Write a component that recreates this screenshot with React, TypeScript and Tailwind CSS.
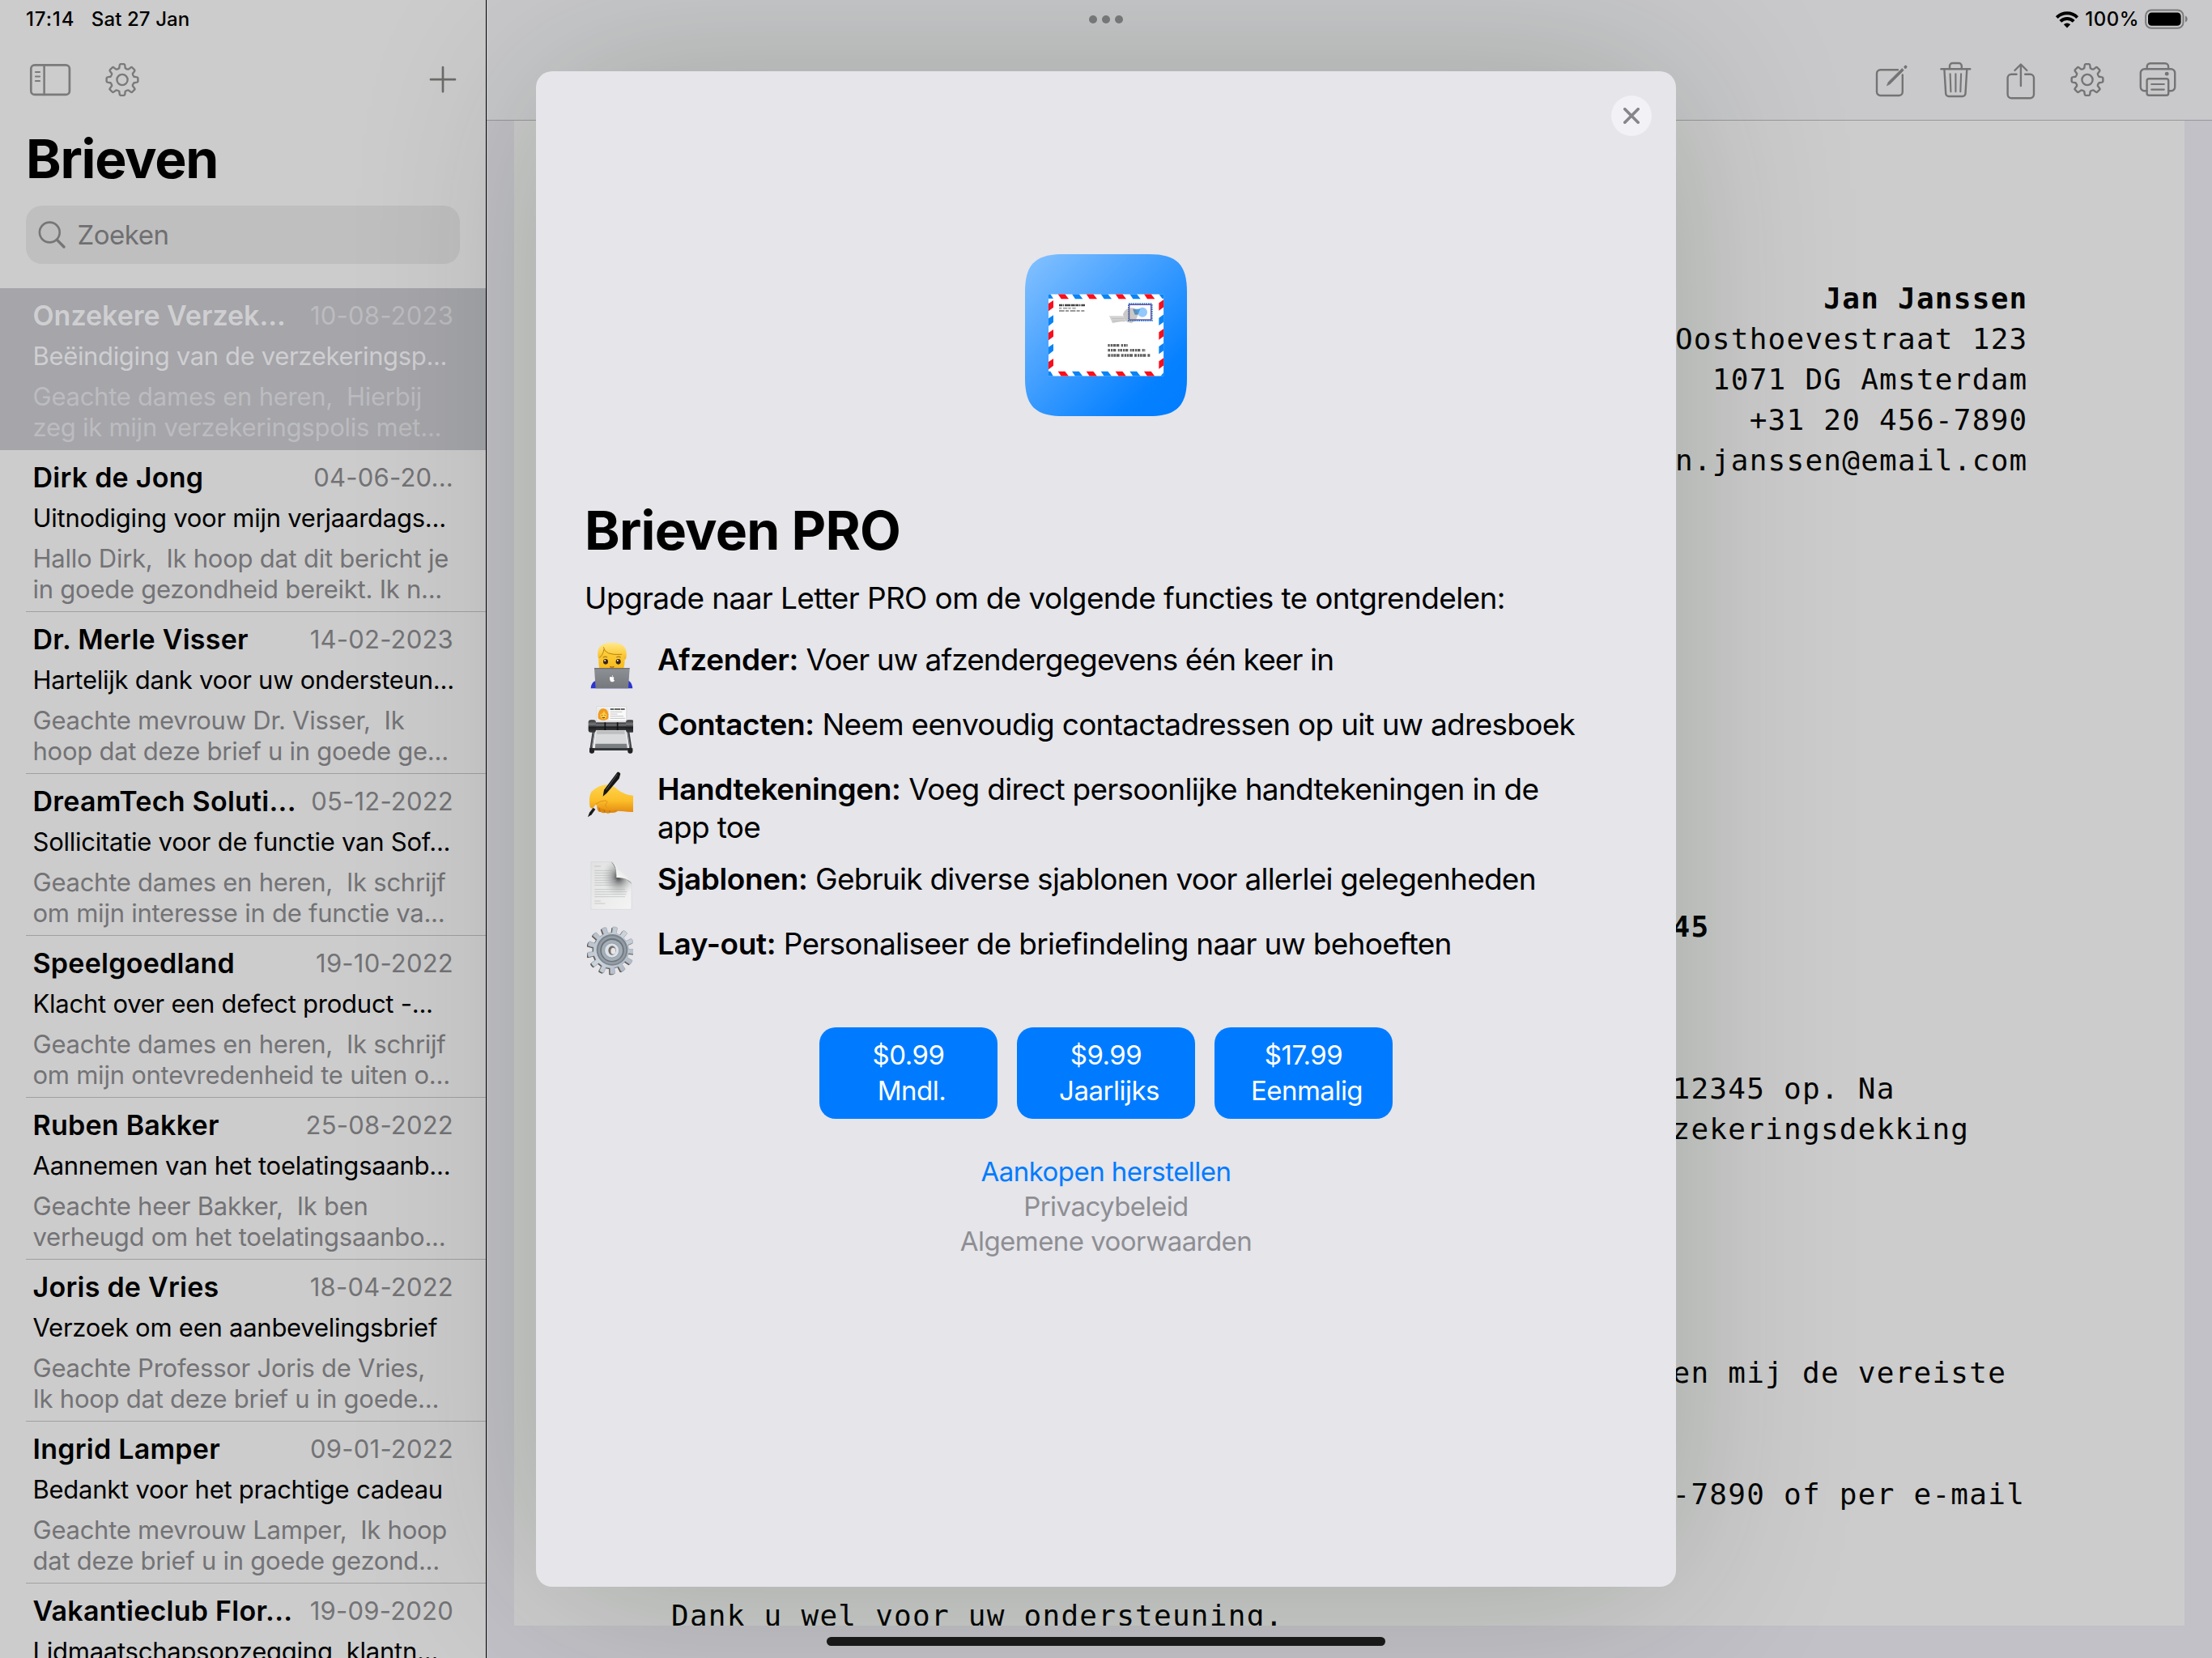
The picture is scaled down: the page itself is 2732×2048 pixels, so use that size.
import React from "react";

type Letter = {
  name: string;
  date: string;
  subject: string;
  preview: [string, string];
  selected?: boolean;
};

const letters: Letter[] = [
  { name: "Onzekere Verzek...", date: "10-08-2023", subject: "Beëindiging van de verzekeringsp...", preview: ["Geachte dames en heren,  Hierbij", "zeg ik mijn verzekeringspolis met..."], selected: true },
  { name: "Dirk de Jong", date: "04-06-20...", subject: "Uitnodiging voor mijn verjaardags...", preview: ["Hallo Dirk,  Ik hoop dat dit bericht je", "in goede gezondheid bereikt. Ik n..."] },
  { name: "Dr. Merle Visser", date: "14-02-2023", subject: "Hartelijk dank voor uw ondersteun...", preview: ["Geachte mevrouw Dr. Visser,  Ik", "hoop dat deze brief u in goede ge..."] },
  { name: "DreamTech Soluti...", date: "05-12-2022", subject: "Sollicitatie voor de functie van Sof...", preview: ["Geachte dames en heren,  Ik schrijf", "om mijn interesse in de functie va..."] },
  { name: "Speelgoedland", date: "19-10-2022", subject: "Klacht over een defect product -...", preview: ["Geachte dames en heren,  Ik schrijf", "om mijn ontevredenheid te uiten o..."] },
  { name: "Ruben Bakker", date: "25-08-2022", subject: "Aannemen van het toelatingsaanb...", preview: ["Geachte heer Bakker,  Ik ben", "verheugd om het toelatingsaanbo..."] },
  { name: "Joris de Vries", date: "18-04-2022", subject: "Verzoek om een aanbevelingsbrief", preview: ["Geachte Professor Joris de Vries,", "Ik hoop dat deze brief u in goede..."] },
  { name: "Ingrid Lamper", date: "09-01-2022", subject: "Bedankt voor het prachtige cadeau", preview: ["Geachte mevrouw Lamper,  Ik hoop", "dat deze brief u in goede gezond..."] },
  { name: "Vakantieclub Flor...", date: "19-09-2020", subject: "Lidmaatschapsopzegging, klantn...", preview: ["", ""] },
];

function polar(cx: number, cy: number, r: number, deg: number) {
  const a = ((deg - 90) * Math.PI) / 180;
  return `${(cx + r * Math.cos(a)).toFixed(2)} ${(cy + r * Math.sin(a)).toFixed(2)}`;
}

/* Closed outline of a cog; half-angles give the tooth width at tip and root. */
function cogPath(cx: number, cy: number, outer: number, inner: number, teeth: number, tip: number, root: number, rotate = 0) {
  const step = 360 / teeth;
  const parts: string[] = [];
  for (let i = 0; i < teeth; i++) {
    const c = rotate + i * step;
    parts.push(`${i ? "L" : "M"}${polar(cx, cy, inner, c - root)}`);
    parts.push(`L${polar(cx, cy, outer - 1.8, c - tip - 1.5)}`);
    parts.push(`Q${polar(cx, cy, outer, c - tip)} ${polar(cx, cy, outer, c - tip + 3)}`);
    parts.push(`L${polar(cx, cy, outer, c + tip - 3)}`);
    parts.push(`Q${polar(cx, cy, outer, c + tip)} ${polar(cx, cy, outer - 1.8, c + tip + 1.5)}`);
    parts.push(`L${polar(cx, cy, inner, c + root)}`);
    parts.push(`Q${polar(cx, cy, inner - 0.9, c + step / 2)} ${polar(cx, cy, inner, c + step - root)}`);
  }
  return parts.join("") + "Z";
}

function ToolIcon({ children, className = "" }: { children: React.ReactNode; className?: string }) {
  return (
    <svg viewBox="0 0 48 48" className={`size-12 shrink-0 overflow-visible ${className}`} fill="none" stroke="currentColor" strokeWidth="2.4" strokeLinecap="round" strokeLinejoin="round">
      {children}
    </svg>
  );
}

const gearOutline = cogPath(24, 23.5, 19.5, 14.9, 8, 9.5, 14.5);

function Gear({ className = "" }: { className?: string }) {
  return (
    <ToolIcon className={className}>
      <path d={gearOutline} />
      <circle cx="24" cy="23.5" r="6.6" />
    </ToolIcon>
  );
}

function LetterRow({ letter, last }: { letter: Letter; last: boolean }) {
  const s = letter.selected;
  return (
    <li className={`flex h-[200px] shrink-0 flex-col ${s ? "bg-[#a5a5aa]" : ""}`}>
      <div className="flex h-[59px] items-end justify-between pl-[40.5px] pr-10">
        <span className={`text-[34px] font-semibold leading-[50px] whitespace-nowrap ${s ? "tracking-[-0.02px] text-[#cfcfd1]" : "tracking-[0.25px] text-black"}`}>{letter.name}</span>
        <span className={`text-[31px] leading-[50px] tracking-[0.22px] whitespace-nowrap ${s ? "text-[#bcbcbf]" : "text-[#737376]"}`}>{letter.date}</span>
      </div>
      <div className={`pl-[40.5px] text-[31px] leading-[50px] whitespace-pre ${s ? "tracking-[-0.34px] text-[#cfcfd1]" : "tracking-[-0.25px] text-black"}`}>{letter.subject}</div>
      <div className={`grow pl-[40.5px] pt-[6px] text-[31px] leading-[38px] tracking-[-0.25px] whitespace-pre ${s ? "text-[#bcbcbf]" : "text-[#737376]"}`}>
        <div>{letter.preview[0]}</div>
        <div>{letter.preview[1]}</div>
      </div>
      {!s && !last && <div className="ml-8 h-px bg-[#a0a0a1]" />}
    </li>
  );
}

function Sidebar() {
  return (
    <aside className="flex h-full w-[601px] shrink-0 flex-col overflow-hidden border-r border-black bg-[#cccccc]">
      <div className="flex h-12 shrink-0 items-center gap-[20.5px] pl-8 text-[24px] font-medium leading-none tracking-[0.1px] text-black">
        <span className="tracking-[0.9px]">17:14</span>
        <span>Sat 27 Jan</span>
      </div>
      <div className="flex h-[100px] shrink-0 items-center pl-[34px] pr-[29px] pt-[2px] text-[#7a7a7a]">
        <svg viewBox="0 0 56 48" className="h-12 w-14 shrink-0" fill="none" stroke="currentColor" strokeLinecap="round">
          <rect x="4.3" y="5.3" width="47.6" height="36.6" rx="4.5" strokeWidth="2.7" />
          <path d="M20.6 5.5V42" strokeWidth="2.5" />
          <path d="M10 14H15M10 19.5H15M10 25H15" strokeWidth="2.2" />
        </svg>
        <Gear className="ml-[36.5px]" />
        <svg viewBox="0 0 48 48" className="ml-auto size-12 shrink-0" fill="none" stroke="#6c6c6b" strokeWidth="2.7" strokeLinecap="round">
          <path d="M24 8.2V38.2M9 23.2H39" />
        </svg>
      </div>
      <h1 className="mt-2 shrink-0 pl-8 text-[66px] font-bold leading-[80px] tracking-[-1.25px] text-black">Brieven</h1>
      <div className="mx-8 mt-[18px] flex h-[72px] shrink-0 items-center rounded-[20px] bg-[#bfbfbf] pl-[15px]">
        <svg viewBox="0 0 36 36" className="size-9" fill="none" stroke="#767677" strokeLinecap="round">
          <circle cx="14.3" cy="15" r="12.4" strokeWidth="2.6" />
          <path d="M23.5 24.4L32 33" strokeWidth="3.4" />
        </svg>
        <span className="ml-[12.5px] text-[33px] leading-[72px] tracking-[-0.48px] text-[#6f6f71]">Zoeken</span>
      </div>
      <ul className="mt-[30px] flex flex-col">
        {letters.map((l, i) => (
          <LetterRow key={l.name} letter={l} last={i === letters.length - 1} />
        ))}
      </ul>
    </aside>
  );
}

function Toolbar() {
  return (
    <header className="flex h-[149px] shrink-0 flex-col border-b border-[#98989a] bg-[#c9c9cb]">
      <div className="flex h-12 shrink-0 items-center justify-end pr-[29px] text-black">
        <svg viewBox="0 0 30 22" className="mr-[7px] h-[22px] w-[30px]" fill="none" stroke="black" strokeWidth="4">
          <path d="M2.3 8.6A18 18 0 0 1 27.7 8.6" />
          <path d="M6.8 13.4A11.6 11.6 0 0 1 23.2 13.4" />
          <path d="M15 21.4L10.9 17.2A5.8 5.8 0 0 1 19.1 17.2Z" fill="black" stroke="none" />
        </svg>
        <span className="mr-[7px] text-[24px] font-medium leading-none tracking-[0.5px]">100%</span>
        <svg viewBox="0 0 54 26" className="h-[26px] w-[54px]">
          <rect x="1.1" y="1.4" width="46.4" height="22.4" rx="7" fill="none" stroke="#7b7b7c" strokeWidth="2" />
          <rect x="4" y="4.4" width="40.6" height="16.4" rx="4.4" fill="black" />
          <path d="M50 8.6C53.6 9.8 53.6 15.4 50 16.6Z" fill="#7b7b7c" />
        </svg>
      </div>
      <div className="flex h-[100px] shrink-0 items-center justify-end pr-[43px] pt-[2px] text-[#747475]">
        <ToolIcon>
          <path d="M32 11.2H10.5A4.5 4.5 0 0 0 6 15.7V38.5A4.5 4.5 0 0 0 10.5 43H33.3A4.5 4.5 0 0 0 37.8 38.5V17.5" />
          <path d="M18.6 30.4L20.4 26.2L37.2 9.6L39.3 11.7L22.6 28.6Z" fill="currentColor" strokeWidth="0.8" />
          <path d="M41.3 7.9L41.6 7.6" strokeWidth="3.8" />
        </ToolIcon>
        <ToolIcon className="ml-[31px]">
          <path d="M6.5 10.3H42.2" />
          <path d="M17 10V6.5A3.5 3.5 0 0 1 20.5 3H28.3A3.5 3.5 0 0 1 31.8 6.5V10" />
          <path d="M10.4 10.5L12.2 40.5A3.6 3.6 0 0 0 15.8 44H32.9A3.6 3.6 0 0 0 36.5 40.5L38.3 10.5" />
          <path d="M17.6 16.2L18.4 38.2M24.4 16.2V38.2M31.1 16.2L30.3 38.2" strokeWidth="2.1" />
        </ToolIcon>
        <ToolIcon className="ml-[33px]">
          <path d="M18.6 16.7H12.2A4.6 4.6 0 0 0 7.6 21.3V41.6A4.6 4.6 0 0 0 12.2 46.2H35.4A4.6 4.6 0 0 0 40 41.6V21.3A4.6 4.6 0 0 0 35.4 16.7H29.2" />
          <path d="M23.9 31V4.6M16.4 12L23.9 4.5L31.4 12" />
        </ToolIcon>
        <Gear className="ml-[33.5px]" />
        <ToolIcon className="ml-[39.5px]">
          <path d="M10.4 37.2H7.4A4.6 4.6 0 0 1 2.8 32.6V15.2A5 5 0 0 1 7.8 10.2H40.2A5 5 0 0 1 45.2 15.2V32.6A4.6 4.6 0 0 1 40.6 37.2H37.4" />
          <path d="M10.7 10V7.2A4 4 0 0 1 14.7 3.2H33.1A4 4 0 0 1 37.1 7.2V10" />
          <rect x="10.6" y="22.2" width="26.6" height="20.6" rx="2.6" />
          <path d="M16.2 29H31.8M16.2 35.6H31.8" strokeWidth="2.1" />
          <circle cx="35.2" cy="16.2" r="2.4" fill="currentColor" stroke="none" />
        </ToolIcon>
      </div>
    </header>
  );
}

function Paper() {
  return (
    <div className="mx-[34px] flex h-[1859px] shrink-0 flex-col overflow-hidden bg-[#cccccc] pt-[194.5px] font-['DejaVu_Sans_Mono',monospace] text-[36px] leading-[50px] tracking-[1.25px] whitespace-pre text-[#050505]">
      <div className="flex flex-col items-end pr-[193.5px]">
        <div className="font-bold">Jan Janssen</div>
        <div>Oosthoevestraat 123</div>
        <div>1071 DG Amsterdam</div>
        <div>+31 20 456-7890</div>
        <div>n.janssen@email.com</div>
      </div>
      <div className="mt-[526.5px] pl-[1430.5px] font-bold">45</div>
      <div className="mt-[150px] pl-[1430.5px]">12345 op. Na</div>
      <div className="pl-[1430.5px]">zekeringsdekking</div>
      <div className="mt-[250.5px] pl-[1430.5px]">en mij de vereiste</div>
      <div className="mt-[100px] pl-[1430.5px]">-7890 of per e-mail</div>
      <div className="mt-[100px] pl-[194px]">Dank u wel voor uw ondersteuning.</div>
    </div>
  );
}

function AppIcon() {
  const red = [200, 305, 413, 519];
  const blue = [252, 359, 466];
  return (
    <svg viewBox="78 72 600 600" className="size-[200px]">
      <defs>
        <linearGradient id="appBg" x1="0" y1="0" x2="1" y2="1">
          <stop offset="0" stopColor="#86c2ff" />
          <stop offset="0.8" stopColor="#0580ff" />
          <stop offset="1" stopColor="#007dff" />
        </linearGradient>
        <clipPath id="envelope">
          <rect x="165" y="220" width="427" height="304" rx="3" />
        </clipPath>
      </defs>
      <path d="M78 212C78 110 116 72 218 72H538C640 72 678 110 678 212V532C678 634 640 672 538 672H218C116 672 78 634 78 532Z" fill="url(#appBg)" />
      <g clipPath="url(#envelope)">
        <rect x="165" y="220" width="427" height="304" fill="white" />
        {red.map((x) => (
          <React.Fragment key={x}>
            <path d={`M${x} 220H${x + 26}L${x + 40} 238H${x + 12}Z`} fill="#fb0d1b" />
            <path d={`M${x} 506H${x + 26}L${x + 40} 524H${x + 12}Z`} fill="#fb0d1b" />
          </React.Fragment>
        ))}
        {blue.map((x) => (
          <React.Fragment key={x}>
            <path d={`M${x} 220H${x + 26}L${x + 40} 238H${x + 12}Z`} fill="#0a84f5" />
            <path d={`M${x} 506H${x + 26}L${x + 40} 524H${x + 12}Z`} fill="#0a84f5" />
          </React.Fragment>
        ))}
        {[243, 351, 459].map((y) => (
          <React.Fragment key={y}>
            <path d={`M165 ${y + 12}L183 ${y}V${y + 26}L165 ${y + 40}Z`} fill="#fb0d1b" />
            <path d={`M574 ${y + 10}L592 ${y - 3}V${y + 25}L574 ${y + 38}Z`} fill="#fb0d1b" />
          </React.Fragment>
        ))}
        {[298, 404].map((y) => (
          <React.Fragment key={y}>
            <path d={`M165 ${y + 12}L183 ${y}V${y + 26}L165 ${y + 40}Z`} fill="#0a84f5" />
            <path d={`M574 ${y + 10}L592 ${y - 3}V${y + 25}L574 ${y + 38}Z`} fill="#0a84f5" />
          </React.Fragment>
        ))}
        <path d="M165 220H172L183 236H165ZM574 220H592V236H586ZM165 506H172L183 524H165ZM580 524L592 510V524Z" fill="#0a84f5" />
      </g>
      <g fill="none" strokeWidth="6">
        <path d="M204 261H300" strokeDasharray="12 2 4 3 22 2 14 2" stroke="#444" strokeWidth="7" />
        <path d="M204 272H266" strokeDasharray="10 5 16 3" stroke="#aaa" />
        <path d="M204 282H298" strokeDasharray="20 4 12 5" stroke="#999" />
      </g>
      <path d="M390 301H440L448 318L402 328Z" fill="#d2d2d2" />
      <path d="M400 311H445M402 320H450" stroke="#bdbdbd" strokeWidth="3" />
      <rect x="462" y="256" width="86" height="62" fill="white" stroke="#2f7fdf" strokeWidth="6" strokeDasharray="5 3" />
      <rect x="464" y="259" width="81" height="56" fill="white" stroke="#5b4f9c" strokeWidth="4" />
      <circle cx="513" cy="287" r="18" fill="#93c8fb" />
      <path d="M477 275H505L496 296H485Z" fill="#4f9de0" />
      <path d="M441 293Q452 266 484 272L497 292Q494 318 472 328Q440 322 441 293Z" fill="#777" opacity="0.4" />
      <g stroke="#222" strokeWidth="10" opacity="0.72">
        <path d="M385 410H458" strokeDasharray="7 3 8 2 9 2 11 7" />
        <path d="M385 428H523" strokeDasharray="8 3 7 2 10 7 6 2" />
        <path d="M385 447H541" strokeDasharray="9 3 7 2 8 2 12 6" />
      </g>
    </svg>
  );
}

const emojiClass = "h-[60px] w-[57px] shrink-0";

function TechnologistIcon() {
  return (
    <svg viewBox="75 70 171 180" className={emojiClass}>
      <defs>
        <linearGradient id="face" x1="0" y1="0" x2="0" y2="1">
          <stop offset="0" stopColor="#ffd541" />
          <stop offset="1" stopColor="#f5b91f" />
        </linearGradient>
        <linearGradient id="hair" x1="0" y1="0" x2="0" y2="1">
          <stop offset="0" stopColor="#ffe98c" />
          <stop offset="0.6" stopColor="#fccf45" />
          <stop offset="1" stopColor="#f0b023" />
        </linearGradient>
        <linearGradient id="laptop" x1="0" y1="0" x2="0" y2="1">
          <stop offset="0" stopColor="#8d9094" />
          <stop offset="1" stopColor="#75787d" />
        </linearGradient>
      </defs>
      <path d="M89 245Q90 222 108 216H228Q242 222 244 245Z" fill="#2a35d0" />
      <path d="M119 120Q116 148 121 172H211Q217 148 214 116Q200 90 167 90Q132 92 119 120Z" fill="url(#face)" />
      <path d="M117 136Q104 76 166 75Q230 74 220 134L215 140Q212 124 204 119Q162 124 138 100Q132 124 122 128Q119 131 117 136Z" fill="url(#hair)" />
      <path d="M136 92Q140 124 204 119M138 100Q133 124 121 131" fill="none" stroke="#b9800f" strokeWidth="3" />
      <ellipse cx="144" cy="146" rx="9" ry="10" fill="#3c2313" />
      <ellipse cx="191" cy="146" rx="9" ry="10" fill="#3c2313" />
      <circle cx="141.5" cy="142" r="2.8" fill="white" />
      <circle cx="188.5" cy="142" r="2.8" fill="white" />
      <path d="M135 130Q142 125 149 129M185 129Q192 125 199 130" fill="none" stroke="#b07a18" strokeWidth="3.500" strokeLinecap="round" />
      <path d="M160 164Q167 169 175 164" fill="none" stroke="#b0651b" strokeWidth="4" />
      <path d="M102 170H233L228 245H107Z" fill="url(#laptop)" />
      <path d="M102 170H233V173H102Z" fill="#5f6266" />
      <path d="M159 207C159 201 165 202 168 203.500C171 202 174 202.500 176 205.500C172 208 173 213 177 215C174 222 171 221 168 220C164 222 159 216 159 207ZM168 202C167.500 199 169 197 171 196C171.500 199 170 201.500 168 202Z" fill="white" />
    </svg>
  );
}

function CardIndexIcon() {
  return (
    <svg viewBox="75 310 171 180" className={emojiClass}>
      <defs>
        <linearGradient id="roller" x1="0" y1="0" x2="0" y2="1">
          <stop offset="0" stopColor="#333" />
          <stop offset="0.35" stopColor="#75777a" />
          <stop offset="0.6" stopColor="#1d1e1f" />
          <stop offset="1" stopColor="#3c3e40" />
        </linearGradient>
      </defs>
      <path d="M111 313H221V366H111Z" fill="#fafafa" stroke="#cfcfcf" strokeWidth="2" />
      <rect x="114" y="318" width="42" height="44" fill="#e4e9ee" />
      <path d="M116 354Q114 320 136 319Q158 322 154 354Q152 362 136 363Q118 362 116 354Z" fill="#f09a1c" />
      <path d="M124 342Q134 338 138 328Q142 338 148 342Q148 358 136 359Q124 358 124 342Z" fill="#fccb45" />
      <path d="M129 345H132M140 345H143M131 353Q136 356 141 353" stroke="#6b3c10" strokeWidth="3" />
      <path d="M161 322H216" stroke="#333" strokeWidth="5" strokeDasharray="14 2 22 2" />
      <path d="M161 332H205M161 340H188M161 348H210M161 356H216" stroke="#c4c4c4" strokeWidth="3" />
      <path d="M109 400H216L224 466H105Z" fill="#d9dadb" />
      <path d="M112 402H214L215 414H111Z" fill="#bcbec0" />
      <path d="M106 450H222L224 466H105Z" fill="#7c7f82" />
      <path d="M100 402L89 475M227 402L238 475" stroke="#3b3e41" strokeWidth="9" strokeLinecap="round" />
      <path d="M101 408L93 462M226 408L234 462" stroke="#8c9094" strokeWidth="2.5" />
      <rect x="84" y="466" width="160" height="9" fill="#34373a" />
      <rect x="84" y="466" width="18" height="20" rx="7" fill="#222" />
      <rect x="226" y="466" width="18" height="20" rx="7" fill="#222" />
      <rect x="96" y="371" width="136" height="29" fill="url(#roller)" />
      <path d="M142 371V400M188 371V400" stroke="#111" strokeWidth="5" />
      <rect x="80" y="362" width="28" height="46" rx="9" fill="url(#roller)" />
      <rect x="219" y="362" width="30" height="46" rx="9" fill="url(#roller)" />
    </svg>
  );
}

function WritingHandIcon() {
  return (
    <svg viewBox="75 545 171 180" className={emojiClass}>
      <defs>
        <linearGradient id="hand" x1="0" y1="0" x2="0" y2="1">
          <stop offset="0" stopColor="#ffd44d" />
          <stop offset="0.6" stopColor="#fbbd28" />
          <stop offset="1" stopColor="#e58e12" />
        </linearGradient>
      </defs>
      <path d="M112 676Q112 700 126 698Q134 704 144 700Q152 706 162 700Q176 704 190 694L246 698V660L160 650Z" fill="#dd8a14" />
      <path d="M86 680Q80 640 92 622Q120 598 146 597Q172 598 190 616Q214 634 246 637V697Q206 696 182 690Q160 698 138 688Q116 682 108 670L94 686Z" fill="url(#hand)" />
      <path d="M108 668Q126 656 140 656Q154 656 148 664Q138 674 150 682" fill="none" stroke="#e0921a" strokeWidth="3" />
      <path d="M120 684L124 696M138 690L142 700M158 692L160 700" stroke="#b96a0c" strokeWidth="3" />
      <path d="M187 551Q192 547 199 556L194 574L148 628L134 640L138 616Z" fill="#161616" />
      <path d="M187 558L146 616" stroke="#5a5a5a" strokeWidth="3" />
      <path d="M98 682L106 688L92 708L78 717L84 700Z" fill="#1a1a1a" />
    </svg>
  );
}

function PageCurlIcon() {
  return (
    <svg viewBox="75 876 171 186" className="h-[62px] w-[57px] shrink-0">
      <defs>
        <linearGradient id="page" x1="0" y1="0" x2="1" y2="1">
          <stop offset="0" stopColor="#e0e1e0" />
          <stop offset="1" stopColor="#f4f4f4" />
        </linearGradient>
        <radialGradient id="curlShade" cx="0.68" cy="0.32" r="0.42">
          <stop offset="0" stopColor="#3f4142" />
          <stop offset="0.5" stopColor="#8a8c8d" stopOpacity="0.5" />
          <stop offset="1" stopColor="#c8c9c9" stopOpacity="0" />
        </radialGradient>
        <linearGradient id="curl" x1="0" y1="1" x2="0.7" y2="0.2">
          <stop offset="0" stopColor="#a7a9aa" />
          <stop offset="0.35" stopColor="#fbfbfb" />
          <stop offset="1" stopColor="#dcdddd" />
        </linearGradient>
      </defs>
      <path d="M90 881H165Q182 882 184 906L186 938Q236 940 240 962V1057H90Z" fill="url(#page)" stroke="#cfd0d0" strokeWidth="1.5" />
      <path d="M90 881H165Q182 882 184 906L186 938Q236 940 240 962V1057H90Z" fill="url(#curlShade)" />
      <path d="M103 897H126M103 913H168M103 922H170M103 931H176M103 940H172M103 949H182M103 958H184M103 967H184M103 983H216M103 992H222M103 1001H220M103 1010H216M103 1026H126M103 1035H142" stroke="#a9abac" strokeWidth="2.2" opacity="0.7" />
      <path d="M165 881Q184 886 187 914Q206 930 240 962Q232 940 186 938Q184 900 165 881Z" fill="#3b3d3e" opacity="0.6" />
      <path d="M167 881Q186 884 190 908Q226 930 239 960Q226 938 184 939Q186 898 167 881Z" fill="url(#curl)" />
    </svg>
  );
}

const cogBody = cogPath(164, 1209, 88, 66, 13, 4.5, 7, 10);

function CogIcon() {
  return (
    <svg viewBox="75 1116 171 186" className="h-[62px] w-[57px] shrink-0">
      <defs>
        <linearGradient id="metal" x1="0" y1="0" x2="1" y2="1">
          <stop offset="0" stopColor="#aeb8c3" />
          <stop offset="0.5" stopColor="#cdd5de" />
          <stop offset="1" stopColor="#a3adb9" />
        </linearGradient>
      </defs>
      <path d={cogBody} fill="#5b5248" transform="translate(-4 3)" />
      <path d={cogBody} fill="url(#metal)" stroke="#8b95a1" strokeWidth="1.5" />
      <circle cx="168" cy="1207" r="58" fill="#7c848d" />
      <circle cx="168" cy="1208" r="52" fill="#949ca5" />
      <circle cx="168" cy="1208" r="44" fill="#6b737b" />
      <circle cx="168" cy="1209" r="39" fill="#a5adb6" />
      <circle cx="167" cy="1209" r="27" fill="#dbe2e9" stroke="#8a929b" strokeWidth="2" />
      <ellipse cx="168" cy="1209" rx="14" ry="17" fill="#777068" />
      <ellipse cx="172" cy="1211" rx="9" ry="12" fill="#e6e5ea" />
    </svg>
  );
}

const features = [
  { icon: <TechnologistIcon />, title: "Afzender:", text: "Voer uw afzendergegevens één keer in", t: "tracking-[-0.9px]" },
  { icon: <CardIndexIcon />, title: "Contacten:", text: "Neem eenvoudig contactadressen op uit uw adresboek", t: "tracking-[-0.72px]" },
  { icon: <WritingHandIcon />, title: "Handtekeningen:", text: "Voeg direct persoonlijke handtekeningen in de app toe", t: "tracking-[-0.7px]" },
  { icon: <PageCurlIcon />, title: "Sjablonen:", text: "Gebruik diverse sjablonen voor allerlei gelegenheden", t: "tracking-[-0.75px]" },
  { icon: <CogIcon />, title: "Lay-out:", text: "Personaliseer de briefindeling naar uw behoeften", t: "tracking-[-0.73px]" },
];

const plans = [
  { price: "$0.99", label: "Mndl." },
  { price: "$9.99", label: "Jaarlijks" },
  { price: "$17.99", label: "Eenmalig" },
];

function ProSheet() {
  return (
    <section className="absolute left-[662px] top-[88px] flex h-[1872px] w-[1408px] flex-col items-center rounded-[20px] bg-[#e5e5ea] text-black shadow-[0_0_230px_rgba(0,30,0,0.2)]">
      <button className="absolute right-[30px] top-[30px] flex size-[50px] items-center justify-center rounded-full bg-[#f2f1f6]">
        <svg viewBox="0 0 20 20" className="size-5" stroke="#85858a" strokeWidth="3.6" strokeLinecap="round">
          <path d="M1.8 1.8L18.2 18.2M18.2 1.8L1.8 18.2" />
        </svg>
      </button>
      <div className="mt-[226px]">
        <AppIcon />
      </div>
      <div className="mt-[101px] w-full pl-[60px] pr-[140px]">
        <h2 className="text-[66px] font-bold leading-[80px] tracking-[-0.75px]">Brieven PRO</h2>
        <p className="mt-[21px] text-[37px] leading-[46px] tracking-[-0.62px] whitespace-nowrap">Upgrade naar Letter PRO om de volgende functies te ontgrendelen:</p>
        <ul className="mt-[30px] flex flex-col gap-[18px]">
          {features.map((f) => (
            <li key={f.title} className="flex min-h-[62px]">
              <div className="w-[90px] shrink-0 pl-[3px]">{f.icon}</div>
              <p className={`-mr-6 text-[37px] leading-[46.5px] ${f.t}`}>
                <span className="font-semibold tracking-[-0.38px]">{f.title}</span> {f.text}
              </p>
            </li>
          ))}
        </ul>
      </div>
      <div className="mt-[64px] flex gap-6 text-[33px] leading-[44px] tracking-[-0.5px] text-white">
        {plans.map((p) => (
          <button key={p.label} className="flex h-[113px] w-[220px] flex-col items-center rounded-[20px] bg-[#007bff] pt-3">
            <span>{p.price}</span>
            <span className="pl-2">{p.label}</span>
          </button>
        ))}
      </div>
      <div className="mt-[44px] flex flex-col items-center text-[33px] leading-[43px] tracking-[-0.55px] text-[#8e8e93]">
        <a className="text-[#007bff]">Aankopen herstellen</a>
        <a>Privacybeleid</a>
        <a>Algemene voorwaarden</a>
      </div>
    </section>
  );
}

export default function App() {
  return (
    <div className="relative flex h-[2048px] w-[2732px] overflow-hidden bg-[#c2c1c7] font-['Inter',sans-serif]">
      <Sidebar />
      <main className="flex min-w-0 grow flex-col">
        <Toolbar />
        <Paper />
      </main>
      <ProSheet />
      <div className="absolute left-1/2 top-[19px] flex -translate-x-1/2 gap-[6px]">
        <i className="size-[10px] rounded-full bg-[#747677]" />
        <i className="size-[10px] rounded-full bg-[#747677]" />
        <i className="size-[10px] rounded-full bg-[#747677]" />
      </div>
      <div className="absolute bottom-[15px] left-1/2 h-[11px] w-[690px] -translate-x-1/2 rounded-full bg-[#191919]" />
    </div>
  );
}
